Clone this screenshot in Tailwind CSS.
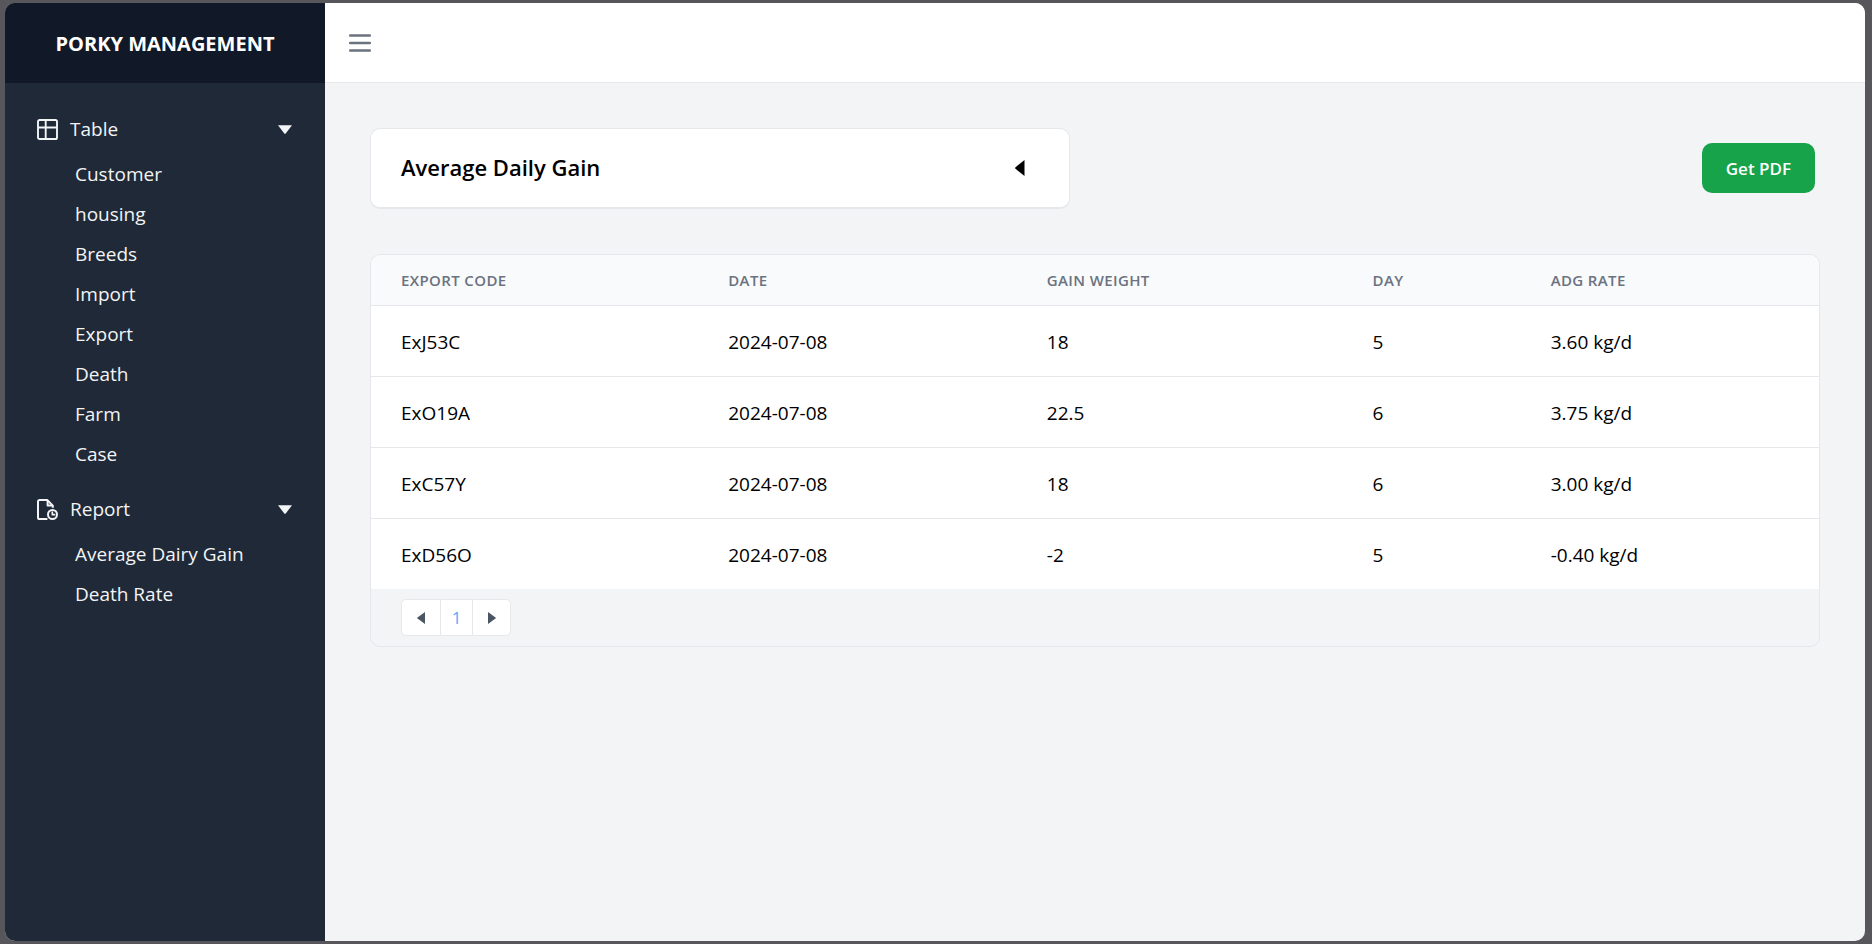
<!DOCTYPE html>
<html lang="en">
<head>
<meta charset="utf-8">
<meta name="viewport" content="width=device-width, initial-scale=1">
<title>Porky Management</title>
<script src="https://cdn.jsdelivr.net/npm/@tailwindcss/browser@4"></script>
</head>
<body class="flex min-h-screen bg-[#56565b] pt-[3px] pr-[7px] pb-[3px] pl-[5px] font-['Segoe_UI','Open_Sans',sans-serif] text-[19px] leading-[30px] text-black">
<div class="flex flex-1 overflow-hidden rounded-[10px] bg-[#f3f4f6]">
  <aside class="w-80 shrink-0 bg-[#1f2937] text-[#f3f4f6]">
    <div class="flex h-20 items-center justify-center bg-[#111827] pt-px text-[20px] font-bold text-white">PORKY MANAGEMENT</div>
    <nav class="flex flex-col gap-[10px] pt-[21px] pr-[33px] pl-8">
      <section>
        <button type="button" class="flex h-[50px] w-full items-center">
          <svg class="size-[21px]" viewBox="0 0 21 21" fill="none" stroke="currentColor" stroke-width="1.9"><rect x="1" y="1" width="19" height="19" rx="1.6"/><path d="M8.7 1v19M1 8.5h19"/></svg>
          <span class="ml-3">Table</span>
          <svg class="ml-auto h-[9px] w-[14px]" viewBox="0 0 14 9" fill="currentColor"><path d="M0 .3h14L7.7 8.6q-.7.7-1.4 0z"/></svg>
        </button>
        <ul class="pl-[38px] leading-10">
          <li><a href="#">Customer</a></li>
          <li><a href="#">housing</a></li>
          <li><a href="#">Breeds</a></li>
          <li><a href="#">Import</a></li>
          <li><a href="#">Export</a></li>
          <li><a href="#">Death</a></li>
          <li><a href="#">Farm</a></li>
          <li><a href="#">Case</a></li>
        </ul>
      </section>
      <section>
        <button type="button" class="flex h-[50px] w-full items-center">
          <svg class="size-[21px]" viewBox="0 0 21 21" fill="none" stroke="currentColor" stroke-width="2" stroke-linejoin="round"><path d="M10.4 20H2.6A1.6 1.6 0 0 1 1 18.4V2.6A1.6 1.6 0 0 1 2.6 1h7.6l5.6 5.6v2.2"/><path d="M10.6 1.4v5h5"/><circle cx="15.5" cy="15.5" r="4.5"/><path d="M15.3 12.6v3.1h3" stroke-width="1.7"/></svg>
          <span class="ml-3">Report</span>
          <svg class="ml-auto h-[9px] w-[14px]" viewBox="0 0 14 9" fill="currentColor"><path d="M0 .3h14L7.7 8.6q-.7.7-1.4 0z"/></svg>
        </button>
        <ul class="pl-[38px] leading-10">
          <li><a href="#">Average Dairy Gain</a></li>
          <li><a href="#">Death Rate</a></li>
        </ul>
      </section>
    </nav>
  </aside>
  <div class="flex min-w-0 flex-1 flex-col">
    <header class="flex h-20 items-center border-b border-[#e5e7eb] bg-white px-6">
      <button type="button" aria-label="Toggle menu" class="text-[#6b7280]">
        <svg class="h-[18px] w-[22px]" viewBox="0 0 22 18" fill="none" stroke="currentColor" stroke-width="2.5" stroke-linecap="round"><path d="M1.2 1.5h19.6M1.2 9h19.6M1.2 16.5h19.6"/></svg>
      </button>
    </header>
    <main class="p-[45px]">
      <div class="flex items-center justify-between">
        <button type="button" class="flex h-[81px] w-[48.3%] items-center justify-between rounded-[10px] border border-b-2 border-[#e5e7eb] bg-white pr-[44px] pl-[30px]">
          <span class="pb-[2px] text-[22px] font-semibold">Average Daily Gain</span>
          <svg class="h-4 w-[10px]" viewBox="0 0 10 16" fill="currentColor"><path d="M9.5 0v16L.5 8.8q-.8-.8 0-1.6z"/></svg>
        </button>
        <button type="button" class="mr-[5px] mb-px flex h-[50px] items-center rounded-[10px] bg-[#16a34a] px-6 pt-[2px] text-[17px] font-semibold text-white">Get PDF</button>
      </div>
      <div class="mt-[45px] overflow-hidden rounded-[10px] border border-[#e5e7eb]">
        <table class="w-full table-fixed border-collapse text-left">
          <thead class="bg-[#f9fafb] text-[15px] tracking-wide text-[#6b7280]">
            <tr class="h-[50px] border-b border-[#e5e7eb]">
              <th scope="col" class="w-[22.6%] px-[30px] font-semibold">EXPORT CODE</th>
              <th scope="col" class="w-[22%] px-[30px] font-semibold">DATE</th>
              <th scope="col" class="w-[22.5%] px-[30px] font-semibold">GAIN WEIGHT</th>
              <th scope="col" class="w-[12.3%] px-[30px] font-semibold">DAY</th>
              <th scope="col" class="px-[30px] font-semibold">ADG RATE</th>
            </tr>
          </thead>
          <tbody class="divide-y divide-[#e5e7eb] bg-white">
            <tr class="h-[71px]"><td class="px-[30px] pt-[2px]">ExJ53C</td><td class="px-[30px] pt-[2px]">2024-07-08</td><td class="px-[30px] pt-[2px]">18</td><td class="px-[30px] pt-[2px]">5</td><td class="px-[30px] pt-[2px]">3.60 kg/d</td></tr>
            <tr class="h-[71px]"><td class="px-[30px] pt-[2px]">ExO19A</td><td class="px-[30px] pt-[2px]">2024-07-08</td><td class="px-[30px] pt-[2px]">22.5</td><td class="px-[30px] pt-[2px]">6</td><td class="px-[30px] pt-[2px]">3.75 kg/d</td></tr>
            <tr class="h-[71px]"><td class="px-[30px] pt-[2px]">ExC57Y</td><td class="px-[30px] pt-[2px]">2024-07-08</td><td class="px-[30px] pt-[2px]">18</td><td class="px-[30px] pt-[2px]">6</td><td class="px-[30px] pt-[2px]">3.00 kg/d</td></tr>
            <tr class="h-[71px]"><td class="px-[30px] pt-[2px]">ExD56O</td><td class="px-[30px] pt-[2px]">2024-07-08</td><td class="px-[30px] pt-[2px]">-2</td><td class="px-[30px] pt-[2px]">5</td><td class="px-[30px] pt-[2px]">-0.40 kg/d</td></tr>
          </tbody>
        </table>
        <div class="flex px-[30px] py-[10px] text-[17px]">
          <button type="button" aria-label="Previous page" class="flex h-[37px] w-10 items-center justify-center rounded-l-[5px] border border-[#e5e7eb] bg-white text-[#4b5563]"><svg class="h-3 w-2" viewBox="0 0 8 12" fill="currentColor"><path d="M8 0v12L.5 6.6q-.6-.6 0-1.2z"/></svg></button>
          <button type="button" class="h-[37px] w-[31px] border-y border-[#e5e7eb] bg-white text-[#60a5fa]">1</button>
          <button type="button" aria-label="Next page" class="flex h-[37px] w-[39px] items-center justify-center rounded-r-[5px] border border-[#e5e7eb] bg-white text-[#4b5563]"><svg class="h-3 w-2" viewBox="0 0 8 12" fill="currentColor"><path d="M0 0v12l7.5-5.4q.6-.6 0-1.2z"/></svg></button>
        </div>
      </div>
    </main>
  </div>
</div>
</body>
</html>
